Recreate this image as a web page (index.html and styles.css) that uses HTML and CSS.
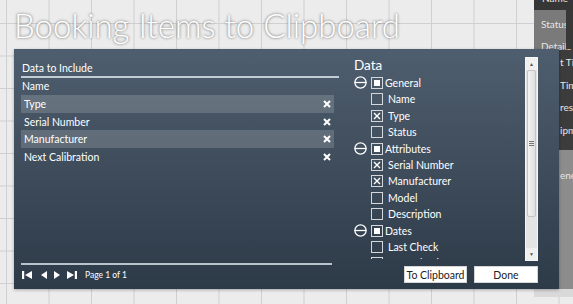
FILE: index.html
```html
<!DOCTYPE html>
<html lang="en">
<head>
    <meta charset="UTF-8">
    <meta name="viewport" content="width=device-width, initial-scale=1.0">
    <title>Booking Items to Clipboard</title>
    <link rel="stylesheet" href="styles.css">
</head>
<body>

    <!-- window behind the dialog, on the right edge -->
    <div class="side-window">
        <div class="sw-head">Name</div>
        <div class="sw-nav">
            <div class="sw-nav-col">
                <div class="sw-link">Status</div>
                <div class="sw-link">Details</div>
            </div>
            <div class="sw-strip"></div>
        </div>
        <div class="sw-fields">
            <div class="sw-field">t Tim</div>
            <div class="sw-field">Tim</div>
            <div class="sw-field">res</div>
            <div class="sw-field">ipm</div>
        </div>
        <div class="sw-lower">
            <div class="sw-field">ener</div>
        </div>
        <div class="sw-foot"></div>
    </div>

    <h1 class="title">Booking Items to Clipboard</h1>

    <div class="dialog">
        <div class="include">
            <div class="include-head">Data to Include</div>
            <div class="col-head">Name</div>
            <div class="item alt">Type <svg class="remove" viewBox="0 0 8 8"><path d="M1 1L7 7M7 1L1 7"/></svg></div>
            <div class="item">Serial Number <svg class="remove" viewBox="0 0 8 8"><path d="M1 1L7 7M7 1L1 7"/></svg></div>
            <div class="item alt">Manufacturer <svg class="remove" viewBox="0 0 8 8"><path d="M1 1L7 7M7 1L1 7"/></svg></div>
            <div class="item">Next Calibration <svg class="remove" viewBox="0 0 8 8"><path d="M1 1L7 7M7 1L1 7"/></svg></div>

            <div class="pager">
                <svg class="pg-first" viewBox="0 0 10 8"><rect x="0" y="0" width="2.2" height="8"/><path d="M10 0V8L3 4Z"/></svg>
                <svg class="pg-prev" viewBox="0 0 6 8"><path d="M6 0V8L0 4Z"/></svg>
                <svg class="pg-next" viewBox="0 0 6 8"><path d="M0 0V8L6 4Z"/></svg>
                <svg class="pg-last" viewBox="0 0 10 8"><path d="M0 0V8L7 4Z"/><rect x="7.8" y="0" width="2.2" height="8"/></svg>
                <span class="pg-text">Page 1 of 1</span>
            </div>
        </div>

        <div class="data">
            <div class="data-body">
                <div class="tree-col">
                    <h2>Data</h2>
                    <div class="tree">
                        <div class="node group"><svg class="expander" viewBox="0 0 13 13"><circle cx="6.5" cy="6.5" r="5.6"/><path d="M0.5 6.5H12.5"/></svg><span class="check partial"></span><span class="label">General</span></div>
                        <div class="node"><span class="check"></span><span class="label">Name</span></div>
                        <div class="node"><span class="check checked"><svg viewBox="0 0 12 12"><path d="M3 3L9 9M9 3L3 9"/></svg></span><span class="label">Type</span></div>
                        <div class="node"><span class="check"></span><span class="label">Status</span></div>
                        <div class="node group"><svg class="expander" viewBox="0 0 13 13"><circle cx="6.5" cy="6.5" r="5.6"/><path d="M0.5 6.5H12.5"/></svg><span class="check partial"></span><span class="label">Attributes</span></div>
                        <div class="node"><span class="check checked"><svg viewBox="0 0 12 12"><path d="M3 3L9 9M9 3L3 9"/></svg></span><span class="label">Serial Number</span></div>
                        <div class="node"><span class="check checked"><svg viewBox="0 0 12 12"><path d="M3 3L9 9M9 3L3 9"/></svg></span><span class="label">Manufacturer</span></div>
                        <div class="node"><span class="check"></span><span class="label">Model</span></div>
                        <div class="node"><span class="check"></span><span class="label">Description</span></div>
                        <div class="node group"><svg class="expander" viewBox="0 0 13 13"><circle cx="6.5" cy="6.5" r="5.6"/><path d="M0.5 6.5H12.5"/></svg><span class="check partial"></span><span class="label">Dates</span></div>
                        <div class="node"><span class="check"></span><span class="label">Last Check</span></div>
                        <div class="node"><span class="check"></span><span class="label">Next Check</span></div>
                    </div>
                </div>
                <div class="scrollbar">
                    <div class="sb-btn">&#9650;</div>
                    <div class="sb-thumb"><span class="grip"></span></div>
                    <div class="sb-track"></div>
                    <div class="sb-btn">&#9660;</div>
                </div>
            </div>
            <div class="actions">
                <button class="btn-copy">To Clipboard</button>
                <button class="btn-done">Done</button>
            </div>
        </div>
    </div>

</body>
</html>
```

FILE: styles.css
```css
body {
    margin: 0;
    width: 573px;
    height: 304px;
    overflow: hidden;
    position: relative;
    font-family: Lato, 'Liberation Sans', sans-serif;
    background-color: #ececec;
    background-image:
        linear-gradient(to right, #d0d0d0 1px, transparent 1px),
        linear-gradient(to bottom, #d0d0d0 1px, transparent 1px);
    background-size: 42.5px 32.5px;
    background-position: 6px 23px;
}

/* window behind */
.side-window {
    position: absolute;
    left: 534px;
    top: -8px;
    width: 39px;
    overflow: hidden;
    white-space: nowrap;
    font-size: 10px;
    color: #e6e6e6;
}
.sw-head {
    height: 18px;
    line-height: 12px;
    padding-left: 8px;
    background: #363636;
}
.sw-nav {
    display: flex;
    height: 39px;
}
.sw-nav-col {
    width: 32px;
    background: #7a7a7a;
    padding-top: 3px;
}
.sw-link {
    height: 22px;
    line-height: 22px;
    padding-left: 7px;
}
.sw-strip {
    flex: 1;
    background: #383838;
}
.sw-fields {
    height: 101px;
    background: #3c3c3c;
    padding-top: 2px;
    box-sizing: border-box;
}
.sw-field {
    height: 22.5px;
    line-height: 22.5px;
    padding-left: 26px;
}
.sw-lower {
    height: 139px;
    background: #8c8c8c;
    padding-top: 14px;
    box-sizing: border-box;
}
.sw-foot {
    height: 8px;
    background: #d9d9d9;
}

.title {
    margin: 0;
    height: 49px;
    padding-left: 14px;
    font-family: Lato, sans-serif;
    font-weight: 300;
    font-size: 33px;
    line-height: 50px;
    color: #fff;
    text-shadow: 0 0 3px rgba(0, 0, 0, 0.6);
    white-space: nowrap;
}

.dialog {
    position: relative;
    z-index: 1;
    margin-left: 14px;
    width: 545px;
    height: 240px;
    box-sizing: border-box;
    padding: 0 21px 0 7px;
    display: flex;
    background: linear-gradient(to bottom, #4f5e6e, #2d3a48);
    box-shadow: 0 1px 3px rgba(0, 0, 0, 0.3);
    color: #fff;
    font-size: 10.5px;
}

/* left: chosen columns */
.include {
    width: 318px;
    display: flex;
    flex-direction: column;
    padding-bottom: 4px;
    box-sizing: border-box;
}
.include-head {
    margin-top: 11px;
    height: 16px;
    line-height: 16px;
    padding-left: 1px;
    border-bottom: 2px solid #c3ccd5;
}
.col-head {
    height: 17px;
    line-height: 17px;
    padding-left: 1px;
}
.item {
    height: 17.7px;
    margin-right: 5px;
    padding: 0 3px;
    display: flex;
    align-items: center;
    justify-content: space-between;
}
.item.alt {
    background: rgba(255, 255, 255, 0.16);
}
.remove {
    width: 8px;
    height: 8px;
    stroke: #fff;
    stroke-width: 2;
}
.pager {
    margin-top: auto;
    margin-right: 7px;
    height: 20px;
    border-top: 2px solid #b9c3cc;
    display: flex;
    align-items: center;
}
.pager svg {
    height: 8px;
    fill: #fff;
}
.pg-first { width: 10px; margin-left: 1px; }
.pg-prev { width: 6px; margin-left: 9px; }
.pg-next { width: 6px; margin-left: 7px; }
.pg-last { width: 10px; margin-left: 7px; }
.pg-text {
    margin-left: 8px;
    font-size: 8.5px;
}

/* right: data tree */
.data {
    margin-left: 15px;
    flex: 1;
    display: flex;
    flex-direction: column;
}
.data-body {
    display: flex;
    height: 212px;
}
.tree-col {
    flex: 1;
    padding-top: 8px;
}
.tree-col h2 {
    margin: 0;
    height: 17.8px;
    line-height: 17.8px;
    font-size: 13.5px;
    font-weight: normal;
}
.tree {
    height: 184.2px;
    overflow: hidden;
}
.node {
    height: 16.4px;
    display: flex;
    align-items: center;
    padding-left: 17px;
}
.node .label {
    margin-left: 5px;
}
.node.group {
    padding-left: 0;
}
.node.group .check {
    margin-left: 4px;
}
.node.group .label {
    margin-left: 2px;
}
.expander {
    width: 13px;
    height: 13px;
    fill: none;
    stroke: #fff;
    stroke-width: 1.3;
}
.check {
    width: 12px;
    height: 12px;
    box-sizing: border-box;
    border: 1.5px solid #d4d8dc;
    display: flex;
    align-items: center;
    justify-content: center;
}
.check svg {
    width: 12px;
    height: 12px;
    flex: none;
    stroke: #fff;
    stroke-width: 1.4;
}
.check.partial::after {
    content: "";
    width: 6px;
    height: 6px;
    background: #fff;
}

.scrollbar {
    width: 13px;
    margin-top: 8px;
    height: 204px;
    box-sizing: border-box;
    border: 1px solid #f6f6f6;
    background: #e4e4e4;
    display: flex;
    flex-direction: column;
}
.sb-btn {
    height: 12px;
    font-size: 5px;
    line-height: 12px;
    text-align: center;
    color: #555;
    background: #f0f0f0;
}
.sb-thumb {
    height: 147px;
    margin: 0 1px;
    box-sizing: border-box;
    border: 1px solid #c4c4c4;
    border-radius: 2px;
    background: linear-gradient(to right, #f4f4f4, #dedede);
    display: flex;
    align-items: center;
    justify-content: center;
}
.grip {
    width: 5px;
    height: 5px;
    background: repeating-linear-gradient(to bottom, #777 0 1px, transparent 1px 2px);
}
.sb-track {
    flex: 1;
}

.actions {
    display: flex;
    justify-content: flex-end;
    gap: 7px;
    margin-top: 5px;
}
.actions button {
    height: 17px;
    padding: 0;
    border: 1px solid #d6d6d6;
    background: #fff;
    color: #222;
    font-family: Lato, sans-serif;
    font-size: 10.5px;
}
.btn-copy { width: 63px; }
.btn-done { width: 64px; }
```
